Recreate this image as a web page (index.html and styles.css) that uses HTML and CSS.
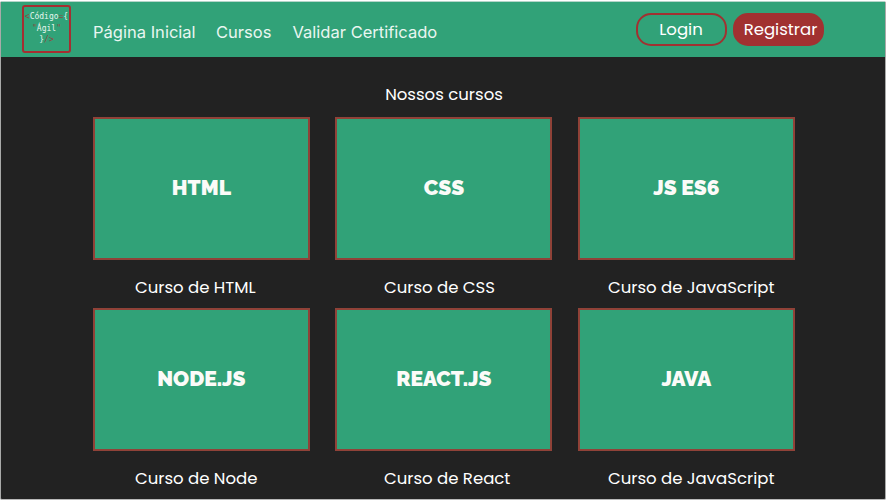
FILE: index.html
```html
<!DOCTYPE html>
<html lang="pt-BR">
<head>
<meta charset="utf-8">
<title>Código Ágil</title>
<link rel="stylesheet" href="styles.css">
</head>
<body>
<div class="page">
  <header class="header">
    <a class="logo"><span><i>&lt;</i>Código<i>=</i>{</span><span><i>"</i>Ágil<i>"</i></span><span>}<i>/&gt;</i></span></a>
    <nav class="nav"><a class="home">Página Inicial</a><a class="courses-link">Cursos</a><a class="validate">Validar Certificado</a></nav>
    <div class="actions"><a class="button login"><span>Login</span></a><a class="button register"><span>Registrar</span></a></div>
  </header>
  <main class="content">
    <h1 class="title"><span>Nossos cursos</span></h1>
    <section class="courses">
      <article class="course html"><div class="cover"><b>HTML</b></div><p><span>Curso de HTML</span></p></article>
      <article class="course css"><div class="cover"><b>CSS</b></div><p><span>Curso de CSS</span></p></article>
      <article class="course js"><div class="cover"><b>JS ES6</b></div><p><span>Curso de JavaScript</span></p></article>
      <article class="course node"><div class="cover"><b>NODE.JS</b></div><p><span>Curso de Node</span></p></article>
      <article class="course react"><div class="cover"><b>REACT.JS</b></div><p><span>Curso de React</span></p></article>
      <article class="course java"><div class="cover"><b>JAVA</b></div><p><span>Curso de JavaScript</span></p></article>
    </section>
  </main>
</div>
</body>
</html>
```
FILE: styles.css
```css
* { box-sizing: border-box; }
body { margin: 0; background: #fff; overflow: hidden; }
.page {
  width: 886px;
  height: 499px;
  margin-top: 1px;
  border: 1px solid #a9aaa9;
  border-bottom-color: #b9b9b9;
  border-top-color: #b4d5c9;
  border-radius: 2px;
  background: #222;
  color: #fff;
  font: 400 16.55px/24px Poppins, Inter, sans-serif;
}
.header { display: flex; height: 55px; background: #31a278; }
.logo {
  display: flex;
  flex-direction: column;
  align-items: center;
  width: 49px;
  height: 48px;
  margin: 3px 0 0 21px;
  padding-top: 4px;
  border: 2px solid #a52e31;
  border-radius: 3px;
  font: 8px/11.5px "DejaVu Sans Mono", monospace;
  white-space: nowrap;
  color: #e6f6ef;
}
.logo i { color: #8a4a42; font-style: normal; }
.nav {
  display: flex;
  gap: 21px;
  margin: 18px 0 0 22px;
  font: 400 16.55px/25px Inter, sans-serif;
  color: #e9f6f1;
  white-space: nowrap;
}
.home { width: 102px; }
.courses-link { width: 55.5px; }
.actions { display: flex; gap: 6px; margin: 11px 0 0 auto; padding-right: 61px; }
.button {
  display: flex;
  justify-content: center;
  align-items: center;
  width: 91px;
  height: 33px;
  border: 2px solid #a13131;
  border-radius: 15px;
}
.button span { padding-top: 1px; }
.login { padding-right: 1px; }
.register { background: #a13131; padding-left: 4px; }
.title { margin: 26px 0 0; padding-left: 2px; font: inherit; text-align: center; }
.courses {
  display: grid;
  grid-template-columns: 217px 217px 217px;
  grid-auto-rows: 191px;
  column-gap: 25.5px;
  margin: 10px 0 0 91.9px;
}
.cover {
  display: flex;
  justify-content: center;
  align-items: center;
  height: 143px;
  padding-bottom: 2px;
  border: 2px solid #904238;
  background: #31a278;
  color: #fbfbf8;
  font: 900 21px/24px Raleway, Lato, sans-serif;
}
.cover b { font-weight: 900; }
.course p { margin: 16px 0 0 42px; white-space: nowrap; }
.css p, .react p { margin-left: 48.5px; }
.js p, .java p { margin-left: 30px; }
```
